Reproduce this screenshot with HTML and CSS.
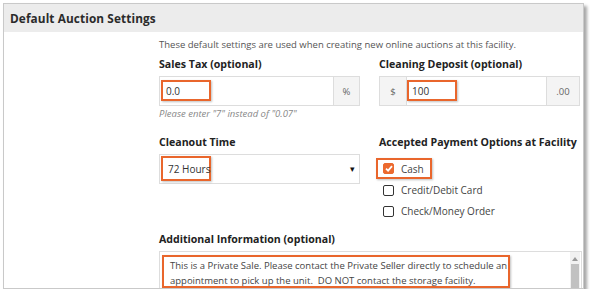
FILE: index.html
```html
<!DOCTYPE html>
<html lang="en">
	<head>
		<meta charset="UTF-8" />
		<title>Default Auction Settings</title>
		<link rel="stylesheet" href="styles.css">
	</head>
	<body>
		<div class="panel">
			<div class="panel-head">
				<h2>Default Auction Settings</h2>
			</div>

			<div class="panel-body">
				<p class="intro">These default settings are used when creating new online auctions at this facility.</p>

				<div class="row">
					<div class="field">
						<label>Sales Tax (optional)</label>
						<div class="group">
							<div class="input"><span class="mark">0.0</span></div>
							<div class="addon addon-pct">%</div>
						</div>
						<p class="hint">Please enter "7" instead of "0.07"</p>
					</div>

					<div class="field">
						<label>Cleaning Deposit (optional)</label>
						<div class="group">
							<div class="addon addon-usd">$</div>
							<div class="input input-flush"><span class="mark">100</span></div>
							<div class="addon addon-cents">.00</div>
						</div>
					</div>
				</div>

				<div class="row row-second">
					<div class="field">
						<label>Cleanout Time</label>
						<div class="select">
							<span class="mark">72 Hours</span>
							<span class="caret">&#9662;</span>
						</div>
					</div>

					<div class="field">
						<label>Accepted Payment Options at Facility</label>
						<div class="checks">
							<div class="check check-on mark">
								<span class="box">
									<svg width="8" height="7" viewBox="0 0 8 7"><path d="M1 3.6 L3.1 5.6 L7 1.2" fill="none" stroke="#fff" stroke-width="1.8"/></svg>
								</span>
								Cash
							</div>
							<div class="check"><span class="box"></span>Credit/Debit Card</div>
							<div class="check"><span class="box"></span>Check/Money Order</div>
						</div>
					</div>
				</div>

				<div class="notes">
					<label>Additional Information (optional)</label>
					<div class="textarea">
						<div class="mark mark-text">This is a Private Sale. Please contact the Private Seller directly to schedule an<br>appointment to pick up the unit.&nbsp; DO NOT contact the storage facility.</div>
						<div class="scrollbar">
							<span class="arrow"></span>
							<span class="thumb"></span>
						</div>
					</div>
				</div>
			</div>
		</div>
	</body>
</html>
```

FILE: styles.css
```css
* {
	box-sizing: border-box;
	margin: 0;
	padding: 0;
}

body {
	font-family: "Open Sans", Arial, sans-serif;
	background-color: #fff;
	color: #333;
}

.panel {
	margin: 3px 0 0 3px;
	width: 581px;
	height: 286px;
	border: 1px solid #c9c9c9;
	background: #fff;
	box-shadow: 3px 3px 3px rgba(0, 0, 0, 0.35);
	overflow: hidden;
}

.panel-head {
	height: 28px;
	background-color: #ececec;
	padding-left: 6px;
	display: flex;
	align-items: center;
}

.panel-head h2 {
	font-size: 11.8px;
	font-weight: bold;
	color: #2b2b2b;
	letter-spacing: 0.1px;
}

.panel-body {
	padding: 6px 0 0 155px;
	width: 578px;
}

.intro {
	font-size: 9.5px;
	color: #555;
	line-height: 14px;
}

.row {
	display: flex;
	gap: 19px;
	margin-top: 5px;
}

.row-second {
	margin-top: 15px;
}

.field {
	width: 201px;
}

label {
	display: block;
	font-size: 10.6px;
	font-weight: bold;
	color: #222;
	line-height: 14px;
	margin-bottom: 5px;
	white-space: nowrap;
}

.group {
	display: flex;
	height: 30px;
	border: 1px solid #ddd;
}

.input {
	flex: 1;
	padding: 3px 0 0 1px;
	font-size: 10px;
	color: #333;
}

.input-flush {
	padding-left: 0;
}

.addon {
	background: #f4f4f4;
	border-left: 1px solid #ddd;
	font-size: 9.5px;
	color: #666;
	display: flex;
	align-items: center;
	justify-content: center;
}

.addon-pct {
	width: 26px;
}

.addon-usd {
	width: 27px;
	border-left: none;
	border-right: 1px solid #ddd;
}

.addon-cents {
	width: 33px;
}

.mark {
	border: 2px solid #e9662c;
	box-shadow: 1px 1px 2px rgba(0, 0, 0, 0.25);
	white-space: nowrap;
}

.input .mark {
	display: flex;
	align-items: center;
	width: 50px;
	height: 21px;
	padding-left: 3px;
}

.hint {
	font-size: 9.5px;
	font-style: italic;
	color: #888;
	margin-top: 1px;
}

.select {
	height: 30px;
	border: 1px solid #ddd;
	padding: 1px 0 0 1px;
	display: flex;
	font-size: 10px;
	color: #333;
}

.select .mark {
	width: 50px;
	height: 25px;
	display: flex;
	align-items: center;
	padding-left: 5px;
}

.caret {
	margin-left: auto;
	margin-right: 4px;
	font-size: 9px;
	color: #111;
	align-self: center;
	margin-top: -2px;
}

.checks {
	display: flex;
	flex-direction: column;
	gap: 1px;
	margin-top: 9px;
}

.check {
	display: flex;
	align-items: center;
	gap: 7px;
	height: 20px;
	padding-left: 4px;
	font-size: 10px;
	color: #444;
}

.check-on {
	width: 56px;
	height: 21px;
	margin-left: -3px;
	padding-left: 5px;
}

.box {
	width: 11px;
	height: 11px;
	border: 1.5px solid #333;
	border-radius: 2px;
	display: flex;
	align-items: center;
	justify-content: center;
}

.check-on .box {
	background: #ec6a2f;
	border-color: #ec6a2f;
}

.notes {
	margin-top: 11px;
}

.textarea {
	display: flex;
	height: 45px;
	width: 423px;
	border: 1px solid #ddd;
	padding: 3px 0 0 2px;
}

.mark-text {
	width: 348px;
	height: 33px;
	padding: 1px 0 0 6px;
	font-size: 9.5px;
	line-height: 15px;
	color: #444;
}

.scrollbar {
	margin-left: auto;
	margin-top: -3px;
	width: 10px;
	margin-right: 1px;
	background: #f1f1f1;
	display: flex;
	flex-direction: column;
	align-items: center;
}

.arrow {
	margin-top: 5px;
	border-left: 3px solid transparent;
	border-right: 3px solid transparent;
	border-bottom: 4px solid #999;
}

.thumb {
	margin-top: 3px;
	width: 8px;
	flex: 1;
	background: #c1c1c1;
}
```
